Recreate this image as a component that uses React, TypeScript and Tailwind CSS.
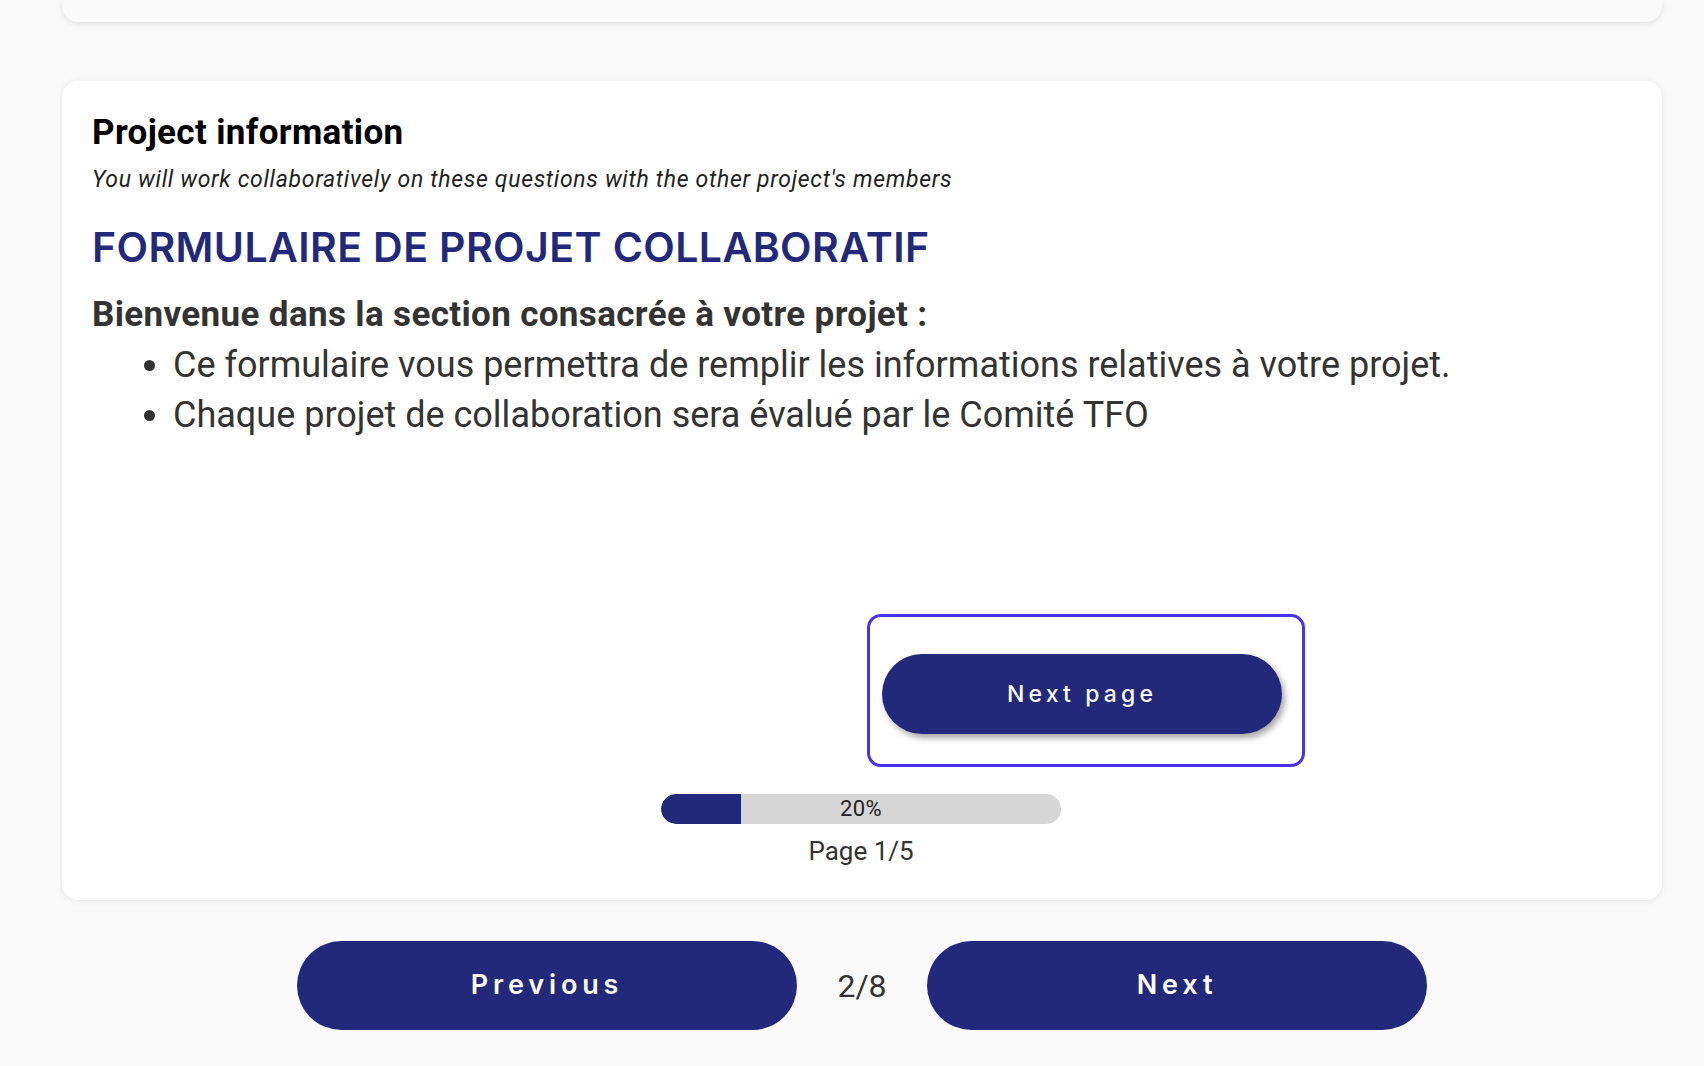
import {ReactElement} from 'react';

const bullets = [
  'Ce formulaire vous permettra de remplir les informations relatives à votre projet.',
  'Chaque projet de collaboration sera évalué par le Comité TFO',
];

function ProgressBar(props:{percent:number}) : ReactElement {
  const {percent} = props;
  return <div className="relative mx-auto mt-[27px] h-[30px] w-[400px] overflow-hidden rounded-full bg-[#d6d6d6]">
    <div className="h-full rounded-l-full bg-[#23297a]" style={{width: percent + '%'}} />
    <span className="absolute inset-0 flex items-center justify-center text-[22px] leading-none tracking-[0.02em] text-[#222]">{percent}%</span>
  </div>;
}

export default function App() : ReactElement {
  return <div className="min-h-screen bg-[#fafafa] pl-[62px] pr-[42px] pb-[40px] font-['Roboto',sans-serif]">
    {/* card above, scrolled out of view */}
    <div className="h-[22px] rounded-b-2xl bg-[#fafafa] shadow-[0_2px_6px_rgba(0,0,0,0.1)]" />

    <section className="mt-[59px] rounded-2xl bg-white pl-[30px] pr-8 pt-[32px] pb-[34px] shadow-[0_1px_7px_rgba(0,0,0,0.09)]">
      <h2 className="text-[35px] font-bold leading-[40px] tracking-[0.01em] text-black">Project information</h2>
      <p className="mt-[13px] text-[23px] italic leading-[27px] tracking-[0.03em] text-[#222]">You will work collaboratively on these questions with the other project's members</p>

      <h1 className="mt-[29px] font-['Inter',sans-serif] text-[41px] font-semibold leading-[50px] tracking-[0.01em] text-[#23297a]">FORMULAIRE DE PROJET COLLABORATIF</h1>
      <p className="mt-[25px] text-[35px] font-bold leading-[36px] tracking-[0.01em] text-[#333]">Bienvenue dans la section consacrée à votre projet :</p>
      <ul className="mt-[7px] list-disc pl-[81px] text-[36px] leading-[50px] text-[#333]">
        {bullets.map(function(text){
          return <li key={text}>{text}</li>;
        })}
      </ul>

      <div className="mt-[174px] grid grid-cols-2">
        <div />
        <div className="ml-[6px] h-[153px] w-[438px] rounded-[14px] border-[3px] border-[#4a30f0] pt-[37px] pl-[12px]">
          <button className="flex h-[80px] w-[400px] items-center justify-center rounded-full bg-[#23297a] font-['Inter',sans-serif] text-[23px] font-medium tracking-[0.18em] text-white shadow-[3px_4px_6px_rgba(0,0,0,0.35)]">Next page</button>
        </div>
      </div>

      <ProgressBar percent={20} />
      <p className="mt-[12px] text-center text-[26px] leading-[30px] text-[#333]">Page 1/5</p>
    </section>

    <nav className="mt-[41px] flex items-center justify-center">
      <button className="flex h-[89px] w-[500px] items-center justify-center rounded-full bg-[#23297a] font-['Inter',sans-serif] text-[27px] font-semibold tracking-[0.18em] text-white">Previous</button>
      <span className="w-[130px] text-center text-[32px] text-[#333]">2/8</span>
      <button className="flex h-[89px] w-[500px] items-center justify-center rounded-full bg-[#23297a] font-['Inter',sans-serif] text-[27px] font-semibold tracking-[0.18em] text-white">Next</button>
    </nav>
  </div>;
}
